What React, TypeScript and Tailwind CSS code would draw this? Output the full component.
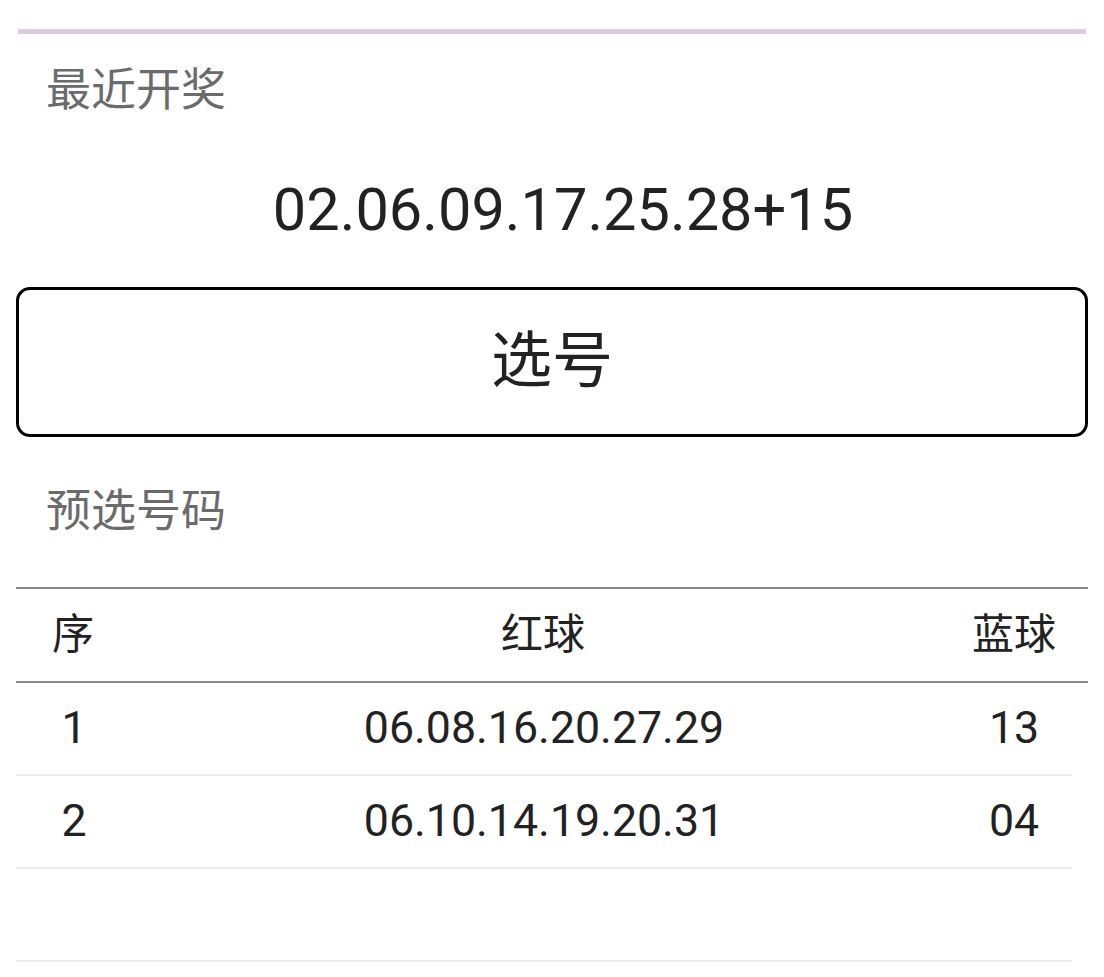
const picks = [
  { no: "1", red: "06.08.16.20.27.29", blue: "13" },
  { no: "2", red: "06.10.14.19.20.31", blue: "04" },
  { no: "", red: "", blue: "" },
];

const App = () => {
  return (
    <div className="w-[1104px] h-[977px] overflow-hidden bg-white font-['Roboto','Noto_Sans_CJK_SC',sans-serif]">
      {/* top accent */}
      <div className="pt-[29px] px-[18px]">
        <div className="h-[5px] bg-[#dccbdf]" />
      </div>

      <div className="mt-[34px] ml-[46px] text-[45px] leading-none text-[#6b6b6b]">最近开奖</div>

      <div className="mt-[68px] pl-[22px] text-center text-[59.5px] leading-none text-[#222222]">
        02.06.09.17.25.28+15
      </div>

      <div className="mt-[46px] mx-[16px] h-[150px] border-[3px] border-black rounded-[14px] flex items-center justify-center">
        <span className="text-[61px] leading-none text-[#222222]">选号</span>
      </div>

      <div className="mt-[52px] ml-[46px] text-[45px] leading-none text-[#6b6b6b]">预选号码</div>

      {/* picks table */}
      <div className="mt-[53px] ml-[16px] w-[1072px]">
        <div className="grid grid-cols-[114px_1fr_148px] items-center h-[96px] border-y-2 border-[#888888] text-[42px] leading-none text-[#222222]">
          <div className="text-center">序</div>
          <div className="text-center pl-4">红球</div>
          <div className="text-center">蓝球</div>
        </div>
        <div className="mr-[16px]">
          {picks.map((p, i) => (
            <div
              key={i}
              className="grid grid-cols-[116px_1fr_116px] items-center h-[93px] border-b-2 border-[#ececec] text-[44.7px] leading-none text-[#222222]"
            >
              <div className="text-center">{p.no}</div>
              <div className="text-center">{p.red}</div>
              <div className="text-center">{p.blue}</div>
            </div>
          ))}
        </div>
      </div>
    </div>
  );
};

export default App;
